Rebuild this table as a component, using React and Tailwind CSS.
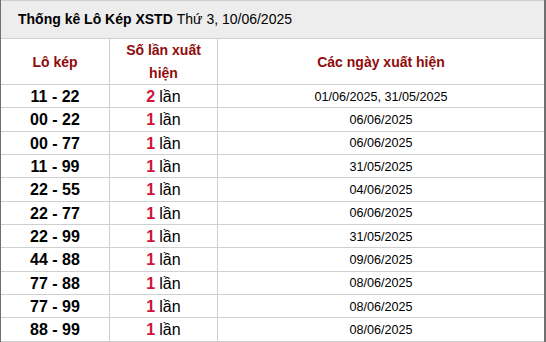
import React from 'react';

const rows = [
  { cap: '11 - 22', lan: 2, ngay: '01/06/2025, 31/05/2025' },
  { cap: '00 - 22', lan: 1, ngay: '06/06/2025' },
  { cap: '00 - 77', lan: 1, ngay: '06/06/2025' },
  { cap: '11 - 99', lan: 1, ngay: '31/05/2025' },
  { cap: '22 - 55', lan: 1, ngay: '04/06/2025' },
  { cap: '22 - 77', lan: 1, ngay: '06/06/2025' },
  { cap: '22 - 99', lan: 1, ngay: '31/05/2025' },
  { cap: '44 - 88', lan: 1, ngay: '09/06/2025' },
  { cap: '77 - 88', lan: 1, ngay: '08/06/2025' },
  { cap: '77 - 99', lan: 1, ngay: '08/06/2025' },
  { cap: '88 - 99', lan: 1, ngay: '08/06/2025' },
];

export default function App() {
  return (
    <div
      className="w-[546px] h-[342px] overflow-hidden bg-white border-l border-r-2 border-[#707070] text-black"
      style={{ fontFamily: '"Liberation Sans", Arial, sans-serif' }}
    >
      {/* Tiêu đề */}
      <div className="h-[39px] flex items-center pl-[17px] bg-[#eeeded] border-y border-[#cfcfcf] text-[14px]">
        <span className="font-bold">Thống kê Lô Kép XSTD</span>
        <span className="ml-1">Thứ 3, 10/06/2025</span>
      </div>

      {/* Header */}
      <div className="grid grid-cols-[109px_108px_1fr] h-[46px] border-b border-[#cfcfcf] text-[14px] font-bold text-[#8f0b0b]">
        <div className="flex items-center justify-center border-r border-[#cfcfcf]">Lô kép</div>
        <div className="flex items-center justify-center text-center leading-[23px] border-r border-[#cfcfcf] px-2">
          Số lần xuất hiện
        </div>
        <div className="flex items-center justify-center">Các ngày xuất hiện</div>
      </div>

      {/* Dữ liệu */}
      {rows.map((r) => (
        <div
          key={r.cap}
          className="grid grid-cols-[109px_108px_1fr] h-[23.33px] border-b border-[#cfcfcf]"
        >
          <div className="flex items-center justify-center border-r border-[#cfcfcf] text-[16px] font-bold">
            {r.cap}
          </div>
          <div className="flex items-center justify-center border-r border-[#cfcfcf] text-[16px]">
            <span className="font-bold text-[#d1123a]">{r.lan}</span>
            <span className="ml-[4px]">lần</span>
          </div>
          <div className="flex items-center justify-center text-[12.6px]">{r.ngay}</div>
        </div>
      ))}
    </div>
  );
}
